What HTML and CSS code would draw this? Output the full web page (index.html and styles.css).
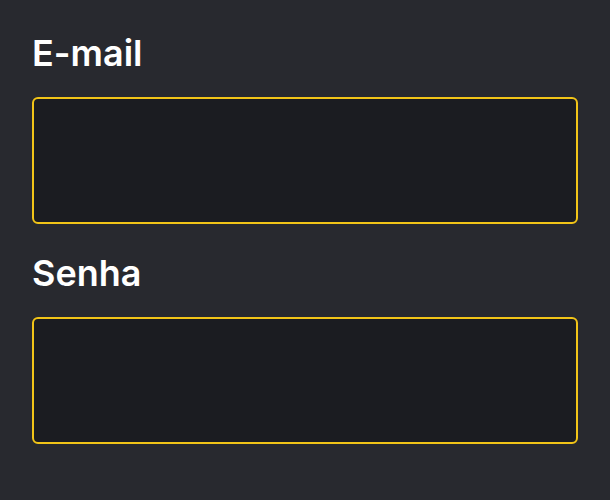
FILE: index.html
```html
<!DOCTYPE html>
<html lang="pt-BR">
<head>
<meta charset="utf-8">
<title>Login</title>
<link rel="stylesheet" href="styles.css">
</head>
<body>
<form class="form">
  <div class="field">
    <label class="label" for="email">E-mail</label>
    <input class="input" id="email" type="email">
  </div>
  <div class="field">
    <label class="label" for="senha">Senha</label>
    <input class="input" id="senha" type="password">
  </div>
</form>
</body>
</html>
```

FILE: styles.css
```css
html, body {
  margin: 0;
  height: 100%;
  background: #28292f;
}
body {
  font-family: Inter, "Noto Sans", sans-serif;
}
.form {
  display: flex;
  flex-direction: column;
  gap: 29px;
  padding: 33px 32px;
}
.field {
  display: flex;
  flex-direction: column;
  gap: 24px;
}
.label {
  color: #ffffff;
  font-size: 36px;
  font-weight: 600;
  line-height: 40px;
}
.input {
  box-sizing: border-box;
  height: 127px;
  width: 100%;
  margin: 0;
  background: #1b1c21;
  border: 2px solid #f2c418;
  border-radius: 6px;
  outline: none;
}
```
